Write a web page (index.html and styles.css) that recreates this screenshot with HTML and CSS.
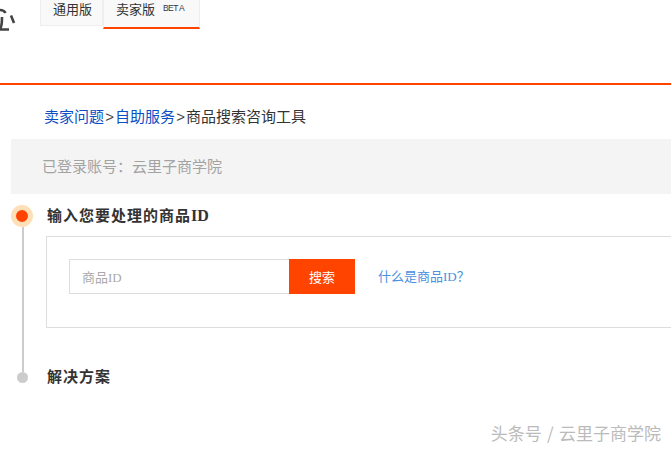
FILE: index.html
```html
<!DOCTYPE html>
<html lang="zh">
<head>
<meta charset="utf-8">
<title>商品搜索咨询工具</title>
<link rel="stylesheet" href="styles.css">
</head>
<body>
<header class="top">
  <svg class="logo" width="16" height="32" viewBox="0 0 16 32" fill="none" stroke="#444" stroke-width="2.6">
    <path d="M0 10 C2.5 10 4.5 11 5.5 13"/>
    <path d="M11 15.5 L14 23"/>
    <path d="M2 17 C2 23 2 27 0 29 M0 29.5 H9"/>
  </svg>
  <nav class="tabs">
    <div class="tab tab-plain">通用版</div>
    <div class="tab tab-active">卖家版<span class="beta">BET A</span></div>
  </nav>
</header>
<div class="crumbs"><a class="crumb-link">卖家问题</a><span class="sep">&gt;</span><a class="crumb-link">自助服务</a><span class="sep">&gt;</span>商品搜索咨询工具</div>
<div class="account">已登录账号：云里子商学院</div>
<section class="steps">
  <div class="step step-one">
    <div class="rail">
      <span class="dot-active"></span>
      <span class="line"></span>
    </div>
    <div class="step-body">
      <h2 class="step-title">输入您要处理的商品<span class="latin">ID</span></h2>
      <div class="panel">
        <div class="search-input">商品<span class="latin">ID</span></div>
        <button class="search-btn">搜索</button>
        <a class="help">什么是商品<span class="latin">ID</span>？</a>
      </div>
    </div>
  </div>
  <div class="step step-two">
    <div class="rail"><span class="dot-idle"></span></div>
    <h2 class="step-title step-title-last">解决方案</h2>
  </div>
</section>
<footer class="mark">头条号 / 云里子商学院</footer>
</body>
</html>
```

FILE: styles.css
```css
* { box-sizing: border-box; }
html, body { margin: 0; padding: 0; height: 449px; overflow: hidden; background: #fff; }
body { font-family: "Noto Sans CJK SC", "Liberation Sans", sans-serif; color: #333; width: 671px; }
.latin { font-family: "Liberation Serif", serif; }

.top { height: 85px; border-bottom: 2px solid #ff4400; display: flex; align-items: flex-start; }
.logo { flex: none; margin-right: 24px; }
.tabs { display: flex; align-items: flex-start; }
.tab { background: #f9f9f9; border: 1px solid #eee; border-top: 0; font-size: 13px; color: #333; display: flex; align-items: center; }
.tab-plain { width: 63px; height: 26px; padding: 0 0 8px 12px; line-height: 14px; }
.tab-active { width: 97px; height: 29px; padding: 0 0 10px 12px; border-bottom: 2px solid #ff4400; }
.beta { font-family: "Liberation Sans", sans-serif; font-size: 8.5px; margin-left: 8px; color: #334; letter-spacing: -0.6px; margin-top: -2px; white-space: nowrap; }

.crumbs { margin: 21px 0 0 44px; font-size: 15px; line-height: 20px; color: #333; height: 20px; }
.crumb-link { color: #0a4fc4; }
.sep { display: inline-block; width: 11px; text-align: center; color: #444; font-family: "Liberation Sans", sans-serif; }

.account { margin: 13px 0 0 11px; height: 55px; background: #f4f4f4; color: #a3a3a3; font-size: 15px; line-height: 53px; padding-left: 31px; }

.steps { margin-top: 11px; }
.step { display: flex; }
.rail { flex: none; width: 46px; position: relative; }
.step-one { height: 167px; }
.step-one .rail { display: flex; flex-direction: column; align-items: flex-start; }
.dot-active { display: block; width: 22px; height: 22px; margin-left: 11px; border-radius: 50%; background: #ff4400; border: 5.5px solid #fde0b8; }
.line { display: block; width: 2px; flex: 1; background: #ccc; margin-left: 22px; }
.dot-idle { display: block; width: 11px; height: 11px; margin-left: 17px; border-radius: 50%; background: #ccc; }
.step-body { flex: 1; min-width: 0; }
.step-title { margin: 0; padding-left: 1px; font-size: 15px; letter-spacing: 1px; font-weight: 700; line-height: 20px; color: #333; }
.step-title .latin { font-size: 16px; letter-spacing: 0; }
.step-title-last { margin-top: -6px; }
.step-two { height: 22px; }

.panel { margin-top: 10px; width: 640px; height: 92px; border: 1px solid #ddd; display: flex; align-items: flex-start; padding: 22px 0 0 22px; }
.search-input { width: 220px; height: 35px; border: 1px solid #ddd; border-right: 0; color: #aaa; font-size: 13px; line-height: 33px; padding-left: 12px; }
.search-btn { width: 66px; height: 35px; border: 0; padding: 0; background: #ff4400; color: #fff; font-family: inherit; font-size: 13px; }
.help { margin-left: 23px; color: #4a8fe0; font-size: 13px; line-height: 33px; }

.mark { margin: 28px 10px 0 0; text-align: right; font-size: 17px; word-spacing: 1.5px; line-height: 22px; color: #bbb; }
```
